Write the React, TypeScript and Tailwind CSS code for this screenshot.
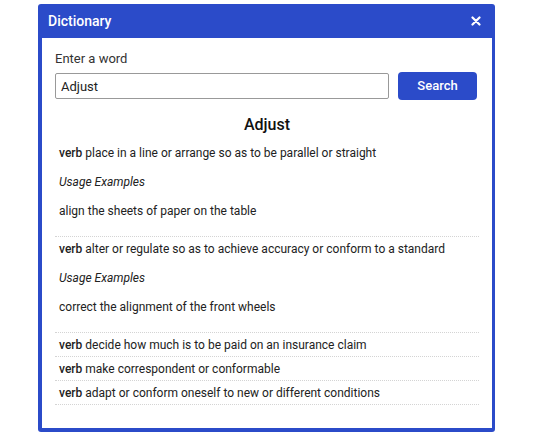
import React from 'react';

interface Sense {
  pos: string;
  definition: string;
  examples?: string[];
}

const senses: Sense[] = [
  {
    pos: 'verb',
    definition: 'place in a line or arrange so as to be parallel or straight',
    examples: ['align the sheets of paper on the table'],
  },
  {
    pos: 'verb',
    definition: 'alter or regulate so as to achieve accuracy or conform to a standard',
    examples: ['correct the alignment of the front wheels'],
  },
  { pos: 'verb', definition: 'decide how much is to be paid on an insurance claim' },
  { pos: 'verb', definition: 'make correspondent or conformable' },
  { pos: 'verb', definition: 'adapt or conform oneself to new or different conditions' },
];

function SenseRow({ sense }: { sense: Sense }) {
  return (
    <li className="border-b border-dotted border-[#d4d4d4] px-1 pt-[4px] pb-[3px]">
      <p className="leading-[16px]">
        <span className="font-medium">{sense.pos}</span> {sense.definition}
      </p>
      {sense.examples && (
        <>
          <p className="italic leading-[16px] mt-[13px]">Usage Examples</p>
          {sense.examples.map((ex) => (
            <p key={ex} className="leading-[16px] mt-[13px] mb-[14px]">
              {ex}
            </p>
          ))}
        </>
      )}
    </li>
  );
}

export default function App() {
  return (
    <div className="w-[540px] h-[440px] bg-white pt-[4px] pl-[38px] font-['Roboto',sans-serif]">
      <div className="w-[457px] h-[428px] bg-[#2b4bc9] rounded-[3px] px-[4px] pb-[4px] pr-[3px] flex flex-col">
        <div className="h-[34px] flex items-center justify-between pl-[6px] pr-[11px] text-white">
          <span className="text-[14px] font-medium">Dictionary</span>
          <svg width="10" height="10" viewBox="0 0 10 10" className="mb-[1px]">
            <path d="M1.5 1.5 L8.5 8.5 M8.5 1.5 L1.5 8.5" stroke="white" strokeWidth="2.2" strokeLinecap="round" />
          </svg>
        </div>
        <div className="flex-1 bg-white px-[13px] pt-[13px] text-[#222] text-[12px]">
          <label className="block text-[13px] leading-[16px] text-[#333]">Enter a word</label>
          <div className="flex items-center gap-[9px] mt-[5px]">
            <input
              defaultValue="Adjust"
              className="w-[334px] h-[26px] border border-[#999] rounded-[2px] px-[5px] text-[13px] text-[#222] outline-none"
            />
            <button className="w-[79px] h-[28px] bg-[#2b4bc9] rounded-[4px] text-white text-[13px] font-medium">
              Search
            </button>
          </div>
          <h2 className="text-center text-[16px] font-medium leading-[20px] mt-[15px] text-[#111]">Adjust</h2>
          <ul className="mt-[6px]">
            {senses.map((s, i) => (
              <SenseRow key={i} sense={s} />
            ))}
          </ul>
        </div>
      </div>
    </div>
  );
}
